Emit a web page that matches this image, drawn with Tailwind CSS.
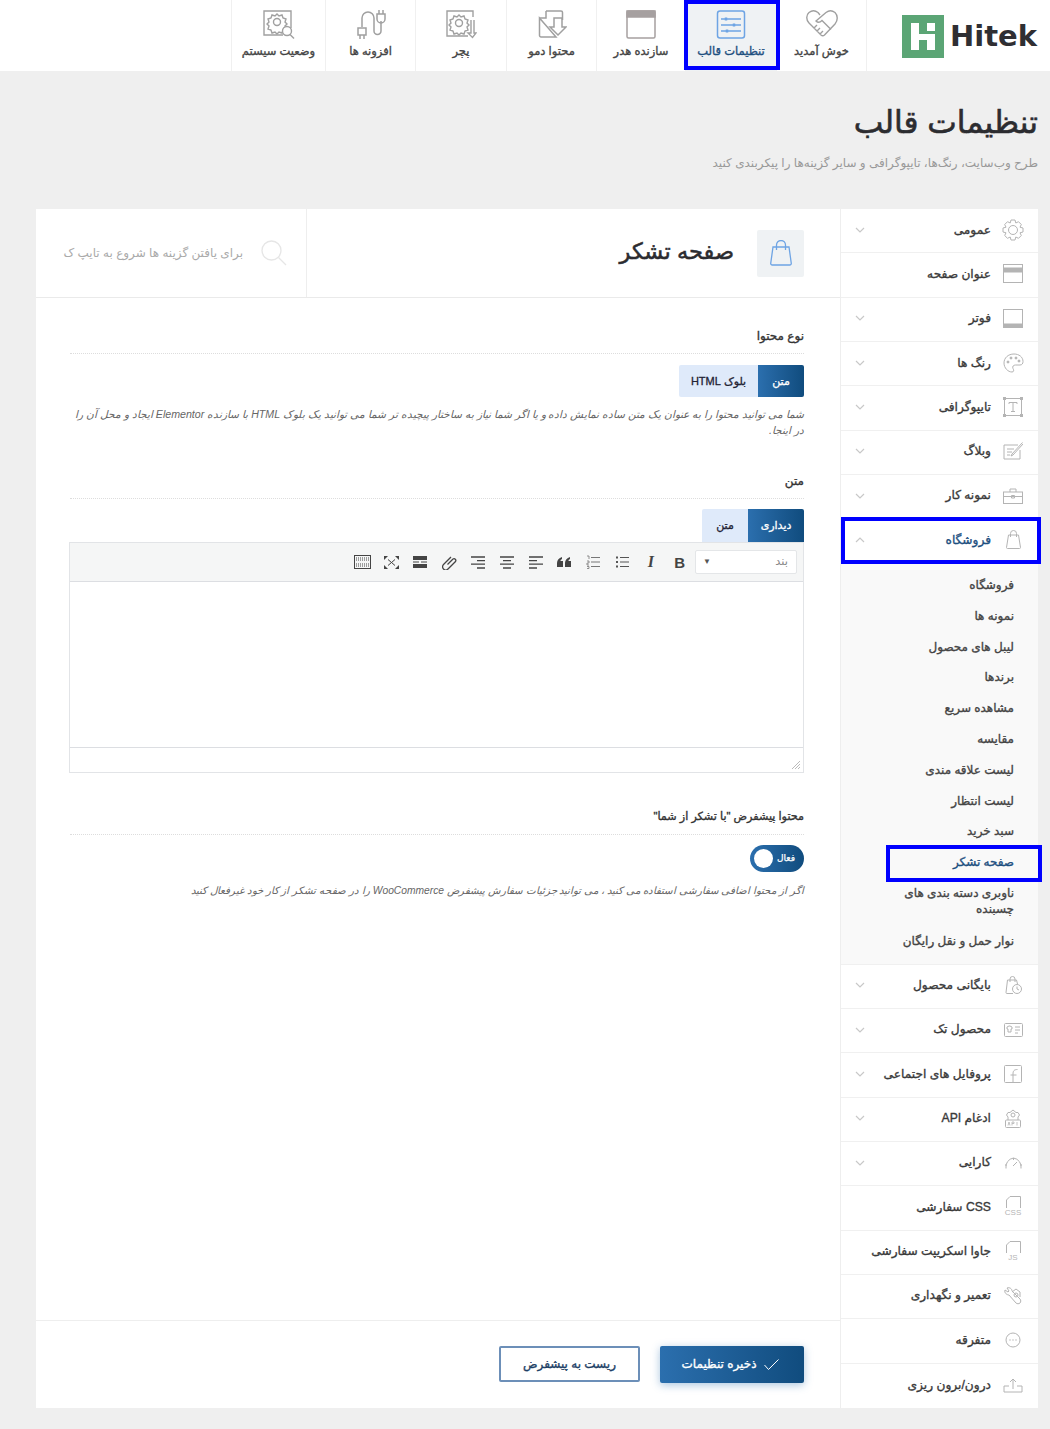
<!DOCTYPE html>
<html dir="rtl" lang="fa">
<head>
<meta charset="utf-8">
<title>تنظیمات قالب</title>
<script src="https://cdn.jsdelivr.net/npm/@tailwindcss/browser@4"></script>
</head>
<body class="m-0 bg-[#efefef] font-['Liberation_Sans','DejaVu_Sans',sans-serif] text-[#333]">
<div class="relative w-[1050px] h-[1429px] overflow-hidden">

<!-- top bar -->
<header class="flex h-[71px] bg-white">
  <div class="w-[183px] flex items-center justify-end gap-[6px] pr-[13px] pt-[1px]" dir="ltr">
    <svg width="42" height="43" viewBox="0 0 42 43"><rect width="42" height="43" fill="#5ba575"/><path d="M9 8h8v11h8V8h8v27h-8V25h-8v10H9z" fill="#fff"/><rect x="25" y="8" width="8" height="8" fill="#fff"/><rect x="25" y="16" width="8" height="3" fill="#5ba575"/></svg>
    <span class="font-['DejaVu_Sans',sans-serif] font-bold text-[29px] leading-none text-[#2f2f33]">Hitek</span>
  </div>
  <nav class="flex text-[11.500px] text-[#444] [-webkit-text-stroke:0.35px]">
    <a class="w-[91px] border-x border-[#f0f0f0] flex flex-col items-center pt-[9px]">
      <svg width="32" height="30" viewBox="0 0 32 30" fill="none" stroke="#a0a0a0" stroke-width="1.400"><path d="M14 6l-2-2.500a7.500 7.500 0 0 0-9 0C0 6 0 11 3 14l12 12c1 1 2.500 1 3.500 0L29 15c3-3.500 3-8.500 0-11.500a7.500 7.500 0 0 0-9 0L10 12c2 2 4 1.500 6-.5l9 9M8 19l3-3M11 22l3-3M14 25l3-3"/></svg>
      <span class="mt-[4px] whitespace-nowrap">خوش آمدید</span>
    </a>
    <a class="w-[90px] bg-[#eff2f4] flex flex-col items-center pt-[9px] text-[#1d4f7f]">
      <svg width="30" height="30" viewBox="0 0 30 30" fill="none" stroke="#6ea4e4" stroke-width="1.500"><rect x="1.500" y="2" width="27" height="27" rx="2.500"/><path d="M5 10h20M5 16h20M5 22h20"/><path d="M10 8.500v3M18 14.500v3M11 20.500v3" stroke-width="2.500"/></svg>
      <span class="mt-[4px] whitespace-nowrap">تنظیمات قالب</span>
    </a>
    <a class="w-[90px] border-x border-[#f0f0f0] flex flex-col items-center pt-[9px]">
      <svg width="30" height="30" viewBox="0 0 30 30" fill="none" stroke="#a6a0a0" stroke-width="1.500"><rect x="1" y="2" width="28" height="27" rx="1.500"/><rect x="1" y="2" width="28" height="6" fill="#a6a0a0"/></svg>
      <span class="mt-[4px] whitespace-nowrap">سازنده هدر</span>
    </a>
    <a class="w-[90px] border-l border-[#f0f0f0] flex flex-col items-center pt-[9px]">
      <svg width="30" height="30" viewBox="0 0 30 30" fill="none" stroke="#a0a0a0" stroke-width="1.500"><path d="M9 2h15a1.500 1.500 0 0 1 1.500 1.500V11M19 28H4a1.500 1.500 0 0 1-1.500-1.500V9z"/><path d="M9 2v7H2.500M17 9v9h-4l8 8 8-8h-4V9z"/></svg>
      <span class="mt-[4px] whitespace-nowrap">محتوا دمو</span>
    </a>
    <a class="w-[91px] border-l border-[#f0f0f0] flex flex-col items-center pt-[9px]">
      <svg width="32" height="30" viewBox="0 0 32 30" fill="none" stroke="#a0a0a0" stroke-width="1.400"><path d="M28 8V2H2v25h21"/><circle cx="14" cy="14" r="3.500"/><path d="M14 6l2 2 3-1 1 3 3 1-1 3 2 2-2 2 1 3-3 1-1 3-3-1-2 2-2-2-3 1-1-3-3-1 1-3-2-2 2-2-1-3 3-1 1-3 3 1z"/><path d="M26 11v13h-3l4.500 4.500L31 24h-2V11"/></svg>
      <span class="mt-[4px] whitespace-nowrap">پچر</span>
    </a>
    <a class="w-[90px] border-l border-[#f0f0f0] flex flex-col items-center pt-[9px]">
      <svg width="30" height="30" viewBox="0 0 30 30" fill="none" stroke="#a0a0a0" stroke-width="1.500"><path d="M6 18V9a6 6 0 0 1 12 0v13a3.500 3.500 0 0 0 7 0V12"/><path d="M2 19h8v7H2zM4 26v4M8 26v4"/><path d="M21 5h8v5a4 4 0 0 1-8 0zM23 5V1M27 5V1"/></svg>
      <span class="mt-[4px] whitespace-nowrap">افزونه ها</span>
    </a>
    <a class="w-[94px] border-l border-[#f0f0f0] flex flex-col items-center pt-[9px]">
      <svg width="32" height="30" viewBox="0 0 32 30" fill="none" stroke="#a0a0a0" stroke-width="1.400"><path d="M20 26H1V2h27v17"/><circle cx="14" cy="13" r="3.500"/><path d="M14 5l2 2 3-1 1 3 3 1-1 3 2 2-2 2 1 3-3 1-1 3-3-1-2 2-2-2-3 1-1-3-3-1 1-3-2-2 2-2-1-3 3-1 1-3 3 1z"/><circle cx="24" cy="22" r="4.500" fill="#fff"/><path d="M27 25.500l4 4"/></svg>
      <span class="mt-[4px] whitespace-nowrap">وضعیت سیستم</span>
    </a>
  </nav>
</header>

<!-- page title -->
<div class="pr-[12px] pt-[30px] h-[138px]">
  <h1 class="m-0 text-[31.400px] leading-[44px] font-normal text-[#2c2c30] [-webkit-text-stroke:0.6px]">تنظیمات قالب</h1>
  <p class="m-0 mt-[8px] text-[12px] leading-[20px] text-[#999]">طرح وب‌سایت، رنگ‌ها، تایپوگرافی و سایر گزینه‌ها را پیکربندی کنید</p>
</div>

<!-- panel -->
<div class="flex mr-[12px] w-[1002px] h-[1199px] bg-white">

  <!-- sidebar -->
  <aside class="w-[198px] shrink-0 border-l border-[#eee] text-[12.200px] text-[#3a3a3a] [-webkit-text-stroke:0.35px]">
    <div class="h-[44.330px] pb-[2px] border-b border-[#f0f0f0] flex items-center">
      <span class="w-[47px] pr-[3px] flex justify-center"><svg width="22" height="22" viewBox="0 0 22 22" fill="none" stroke="#b4b4b4"><circle cx="11" cy="11" r="4.500"/><path d="M9 1h4l.8 3 2.700-1.300 2.800 2.800L18 8.200l3 .8v4l-3 .8 1.300 2.700-2.800 2.800-2.700-1.300-.8 3H9l-.8-3-2.700 1.300-2.800-2.800L4 13.800 1 13V9l3-.8-1.300-2.700 2.800-2.800L8.200 4z"/></svg></span>
      <span class="flex-1">عمومی</span>
      <svg class="ml-[14px]" width="10" height="6" viewBox="0 0 10 6" fill="none" stroke="#c8c8c8" stroke-width="1.200"><path d="M1 1l4 4 4-4"/></svg>
    </div>
    <div class="h-[44.330px] pb-[2px] border-b border-[#f0f0f0] flex items-center">
      <span class="w-[47px] pr-[3px] flex justify-center"><svg width="20" height="19" viewBox="0 0 20 19" fill="none" stroke="#b4b4b4"><rect x=".5" y=".5" width="19" height="18"/><rect x=".5" y="4" width="19" height="4" fill="#b4b4b4"/></svg></span>
      <span class="flex-1">عنوان صفحه</span>
    </div>
    <div class="h-[44.330px] pb-[2px] border-b border-[#f0f0f0] flex items-center">
      <span class="w-[47px] pr-[3px] flex justify-center"><svg width="20" height="19" viewBox="0 0 20 19" fill="none" stroke="#b4b4b4"><rect x=".5" y=".5" width="19" height="18"/><rect x=".5" y="15" width="19" height="3.500" fill="#b4b4b4"/></svg></span>
      <span class="flex-1">فوتر</span>
      <svg class="ml-[14px]" width="10" height="6" viewBox="0 0 10 6" fill="none" stroke="#c8c8c8" stroke-width="1.200"><path d="M1 1l4 4 4-4"/></svg>
    </div>
    <div class="h-[44.330px] pb-[2px] border-b border-[#f0f0f0] flex items-center">
      <span class="w-[47px] pr-[3px] flex justify-center"><svg width="21" height="20" viewBox="0 0 21 20" fill="none" stroke="#b4b4b4"><path d="M11 1C5 1 1 5 1 10s4 9 8 9c2 0 2-2 1-3.500-1-2 .5-3.500 2.500-3.500H17c2 0 3-1.500 3-3.500C20 4 16 1 11 1z"/><circle cx="5" cy="9" r="1" fill="#b4b4b4"/><circle cx="8" cy="5" r="1" fill="#b4b4b4"/><circle cx="13" cy="5" r="1" fill="#b4b4b4"/><circle cx="16" cy="8" r="1" fill="#b4b4b4"/></svg></span>
      <span class="flex-1">رنگ ها</span>
      <svg class="ml-[14px]" width="10" height="6" viewBox="0 0 10 6" fill="none" stroke="#c8c8c8" stroke-width="1.200"><path d="M1 1l4 4 4-4"/></svg>
    </div>
    <div class="h-[44.330px] pb-[2px] border-b border-[#f0f0f0] flex items-center">
      <span class="w-[47px] pr-[3px] flex justify-center"><svg width="20" height="20" viewBox="0 0 20 20" fill="none" stroke="#b4b4b4"><rect x="1.500" y="1.500" width="17" height="17"/><rect x=".5" y=".5" width="2" height="2" fill="#b4b4b4"/><rect x="17.500" y=".5" width="2" height="2" fill="#b4b4b4"/><rect x=".5" y="17.500" width="2" height="2" fill="#b4b4b4"/><rect x="17.500" y="17.500" width="2" height="2" fill="#b4b4b4"/><path d="M6 7V5.500h8V7M10 5.500v9M8 14.500h4"/></svg></span>
      <span class="flex-1">تایپوگرافی</span>
      <svg class="ml-[14px]" width="10" height="6" viewBox="0 0 10 6" fill="none" stroke="#c8c8c8" stroke-width="1.200"><path d="M1 1l4 4 4-4"/></svg>
    </div>
    <div class="h-[44.330px] pb-[2px] border-b border-[#f0f0f0] flex items-center">
      <span class="w-[47px] pr-[3px] flex justify-center"><svg width="20" height="18" viewBox="0 0 20 18" fill="none" stroke="#b4b4b4"><path d="M15 3H1v14h16V8M4 7h7M4 10h5M4 13h3"/><path d="M19.500.5L9 12l-1 2 2-1L20 2"/></svg></span>
      <span class="flex-1">وبلاگ</span>
      <svg class="ml-[14px]" width="10" height="6" viewBox="0 0 10 6" fill="none" stroke="#c8c8c8" stroke-width="1.200"><path d="M1 1l4 4 4-4"/></svg>
    </div>
    <div class="h-[44.330px] pb-[2px] border-b border-[#f0f0f0] flex items-center">
      <span class="w-[47px] pr-[3px] flex justify-center"><svg width="20" height="16" viewBox="0 0 20 16" fill="none" stroke="#b4b4b4"><rect x=".5" y="4" width="19" height="11.500"/><path d="M7 4V1h6v3M.5 8.500h19M8.500 7.500h3v2.500h-3z"/></svg></span>
      <span class="flex-1">نمونه کار</span>
      <svg class="ml-[14px]" width="10" height="6" viewBox="0 0 10 6" fill="none" stroke="#c8c8c8" stroke-width="1.200"><path d="M1 1l4 4 4-4"/></svg>
    </div>
    <div class="h-[44.330px] pb-[2px] border-b border-[#f0f0f0] flex items-center text-[#1d4f7f]">
      <span class="w-[47px] pr-[3px] flex justify-center"><svg width="15" height="19" viewBox="0 0 15 19" fill="none" stroke="#b4b4b4"><path d="M2.500 5h10l2 12.500a1 1 0 0 1-1 1h-12a1 1 0 0 1-1-1zM4.500 7V3.500a3 3 0 0 1 6 0V7"/></svg></span>
      <span class="flex-1">فروشگاه</span>
      <svg class="ml-[14px]" width="10" height="6" viewBox="0 0 10 6" fill="none" stroke="#c8c8c8" stroke-width="1.200"><path d="M1 5l4-4 4 4"/></svg>
    </div>

    <ul class="m-0 pt-[6px] pr-[24px] pl-[50px] h-[401px] bg-[#f9f9f9] border-b border-[#f0f0f0] list-none text-[12px] text-[#444]">
      <li class="h-[30.800px] flex items-center">فروشگاه</li>
      <li class="h-[30.800px] flex items-center">نمونه ها</li>
      <li class="h-[30.800px] flex items-center">لیبل های محصول</li>
      <li class="h-[30.800px] flex items-center">برندها</li>
      <li class="h-[30.800px] flex items-center">مشاهده سریع</li>
      <li class="h-[30.800px] flex items-center">مقایسه</li>
      <li class="h-[30.800px] flex items-center">لیست علاقه مندی</li>
      <li class="h-[30.800px] flex items-center">لیست انتظار</li>
      <li class="h-[30.800px] flex items-center">سبد خرید</li>
      <li class="h-[30.800px] flex items-center text-[#1d4f7f]">صفحه تشکر</li>
      <li class="h-[47px] flex items-center leading-[16px]">ناوبری دسته بندی های چسبنده</li>
      <li class="h-[32px] flex items-center whitespace-nowrap">نوار حمل و نقل رایگان</li>
    </ul>

    <div class="h-[44.330px] pb-[2px] border-b border-[#f0f0f0] flex items-center">
      <span class="w-[47px] pr-[3px] flex justify-center"><svg width="17" height="20" viewBox="0 0 17 20" fill="none" stroke="#b4b4b4"><path d="M8 18.500H2a1 1 0 0 1-1-1L2.500 5h9l1 4M5 7V4a2.500 2.500 0 0 1 5 0v3"/><circle cx="12" cy="14" r="4.500"/><path d="M12 11.500V14l2 1"/></svg></span>
      <span class="flex-1">بایگانی محصول</span>
      <svg class="ml-[14px]" width="10" height="6" viewBox="0 0 10 6" fill="none" stroke="#c8c8c8" stroke-width="1.200"><path d="M1 1l4 4 4-4"/></svg>
    </div>
    <div class="h-[44.330px] pb-[2px] border-b border-[#f0f0f0] flex items-center">
      <span class="w-[47px] pr-[3px] flex justify-center"><svg width="19" height="14" viewBox="0 0 19 14" fill="none" stroke="#b4b4b4"><rect x=".5" y=".5" width="18" height="13" rx="1"/><path d="M3 4l2-1h1l2 1v2H7v3H4V6H3zM11 4h5M11 7h5M11 10h3"/></svg></span>
      <span class="flex-1">محصول تک</span>
      <svg class="ml-[14px]" width="10" height="6" viewBox="0 0 10 6" fill="none" stroke="#c8c8c8" stroke-width="1.200"><path d="M1 1l4 4 4-4"/></svg>
    </div>
    <div class="h-[44.330px] pb-[2px] border-b border-[#f0f0f0] flex items-center">
      <span class="w-[47px] pr-[3px] flex justify-center"><svg width="18" height="18" viewBox="0 0 18 18" fill="none" stroke="#b4b4b4"><rect x=".5" y=".5" width="17" height="17" rx="1"/><path d="M9 17.500V9c0-3 1-4.500 4.500-4.500M6.500 10h6"/></svg></span>
      <span class="flex-1 whitespace-nowrap">پروفایل های اجتماعی</span>
      <svg class="ml-[14px]" width="10" height="6" viewBox="0 0 10 6" fill="none" stroke="#c8c8c8" stroke-width="1.200"><path d="M1 1l4 4 4-4"/></svg>
    </div>
    <div class="h-[44.330px] pb-[2px] border-b border-[#f0f0f0] flex items-center">
      <span class="w-[47px] pr-[3px] flex justify-center"><svg width="16" height="19" viewBox="0 0 16 19" fill="none" stroke="#b4b4b4"><circle cx="8" cy="6" r="2"/><path d="M3 11V8L1.500 6 3 3.500l2 0L8 1l3 2.500 2 0L14.500 6 13 8v3"/><rect x=".5" y="11" width="15" height="7.500" rx="1"/><path d="M3 16.500l1-3.500 1 3.500M7 16.500V13h2v1.500H7M12 13v3.500" stroke-width=".8"/></svg></span>
      <span class="flex-1">ادغام API</span>
      <svg class="ml-[14px]" width="10" height="6" viewBox="0 0 10 6" fill="none" stroke="#c8c8c8" stroke-width="1.200"><path d="M1 1l4 4 4-4"/></svg>
    </div>
    <div class="h-[44.330px] pb-[2px] border-b border-[#f0f0f0] flex items-center">
      <span class="w-[47px] pr-[3px] flex justify-center"><svg width="19" height="12" viewBox="0 0 19 12" fill="none" stroke="#b4b4b4"><path d="M2 11.500A9 9 0 0 1 9.500 1 9 9 0 0 1 17 11.500M9 9l4-4M1 8h2M16 8h2M9.500 1v2"/></svg></span>
      <span class="flex-1">کارایی</span>
      <svg class="ml-[14px]" width="10" height="6" viewBox="0 0 10 6" fill="none" stroke="#c8c8c8" stroke-width="1.200"><path d="M1 1l4 4 4-4"/></svg>
    </div>
    <div class="h-[44.330px] pb-[2px] border-b border-[#f0f0f0] flex items-center">
      <span class="w-[47px] pr-[3px] flex flex-col items-center justify-center leading-none"><svg width="15" height="12" viewBox="0 0 15 12" fill="none" stroke="#b4b4b4"><path d="M.5 12V4L4 .5h10.500V12"/></svg><span class="text-[8px] text-[#b4b4b4] mt-[1px] [-webkit-text-stroke:0]">CSS</span></span>
      <span class="flex-1">CSS سفارشی</span>
    </div>
    <div class="h-[44.330px] pb-[2px] border-b border-[#f0f0f0] flex items-center">
      <span class="w-[47px] pr-[3px] flex flex-col items-center justify-center leading-none"><svg width="15" height="12" viewBox="0 0 15 12" fill="none" stroke="#b4b4b4"><path d="M.5 12V4L4 .5h10.500V12"/></svg><span class="text-[8px] text-[#b4b4b4] mt-[1px] [-webkit-text-stroke:0]">JS</span></span>
      <span class="flex-1 whitespace-nowrap">جاوا اسکریپت سفارشی</span>
    </div>
    <div class="h-[44.330px] pb-[2px] border-b border-[#f0f0f0] flex items-center">
      <span class="w-[47px] pr-[3px] flex justify-center"><svg width="18" height="18" viewBox="0 0 18 18" fill="none" stroke="#b4b4b4"><path d="M1 3l3 2 1-1-2-3c3-1 5 1 5 3l8 8c1 1 1 3 0 4s-3 1-4 0L5 8C3 8 0 6 1 3z"/><circle cx="12" cy="8" r="2"/><path d="M8 5l4-3 4 3v5"/></svg></span>
      <span class="flex-1">تعمیر و نگهداری</span>
    </div>
    <div class="h-[44.330px] pb-[2px] border-b border-[#f0f0f0] flex items-center">
      <span class="w-[47px] pr-[3px] flex justify-center"><svg width="16" height="16" viewBox="0 0 16 16" fill="none" stroke="#b4b4b4"><circle cx="8" cy="8" r="7"/><path d="M4.500 8h1M7.500 8h1M10.500 8h1" stroke-width="1.300"/></svg></span>
      <span class="flex-1">متفرقه</span>
    </div>
    <div class="h-[44px] flex items-center">
      <span class="w-[47px] pr-[3px] flex justify-center"><svg width="20" height="15" viewBox="0 0 20 15" fill="none" stroke="#b4b4b4"><path d="M10 11V1M7 4l3-3 3 3M6 8H1v6h18V8h-5"/></svg></span>
      <span class="flex-1">درون/برون ریزی</span>
    </div>
  </aside>

  <!-- content -->
  <main class="flex-1 min-w-0 flex flex-col">
    <div class="h-[89px] flex border-b border-[#eaeaea] shrink-0">
      <div class="flex-1 flex items-center pr-[36px] gap-[23px]">
        <span class="w-[47px] h-[47px] rounded-[2px] bg-[#eff2f4] flex items-center justify-center"><svg width="22" height="26" viewBox="0 0 22 26" fill="none" stroke="#6ea4e4" stroke-width="1.300"><path d="M3 7h16l2.300 16.500a1.500 1.500 0 0 1-1.500 1.500H2.200a1.500 1.500 0 0 1-1.500-1.500zM6.500 10V5a4.500 4.500 0 0 1 9 0v5"/></svg></span>
        <h2 class="m-0 pb-[3px] text-[22.500px] font-normal text-[#2c2c30] [-webkit-text-stroke:0.5px]">صفحه تشکر</h2>
      </div>
      <div class="w-[271px] border-r border-[#eee] flex items-center pr-[19px] gap-[18px]">
        <svg class="shrink-0" width="26" height="26" viewBox="0 0 26 26" fill="none" stroke="#e6e6e6" stroke-width="1.300"><circle cx="10.500" cy="10.500" r="9.500"/><path d="M17.500 17.500l7.500 7.500"/></svg>
        <span class="whitespace-nowrap text-[12px] text-[#aaa]">برای یافتن گزینه ها شروع به تایپ ک</span>
      </div>
    </div>

    <div class="flex-1 pr-[36px] pl-[34px] pt-[28px]">
      <h3 class="m-0 text-[12px] leading-[20px] font-normal text-[#333] [-webkit-text-stroke:0.35px] pb-[7px] border-b border-dotted border-[#ddd]">نوع محتوا</h3>
      <div class="flex mt-[11px] h-[32px] text-[11px] [-webkit-text-stroke:0.3px]">
        <span class="w-[46px] rounded-r-[2px] bg-gradient-to-l from-[#104c7e] to-[#2b6fae] text-white flex items-center justify-center">متن</span>
        <span class="w-[79px] rounded-l-[2px] bg-[#dfeafa] text-[#223] flex items-center justify-center">بلوک HTML</span>
      </div>
      <p class="m-0 mt-[9px] mb-[1px] text-[10.650px] leading-[16px] italic text-[#666] whitespace-nowrap">شما می توانید محتوا را به عنوان یک متن ساده نمایش داده و یا اگر شما نیاز به ساختار پیچیده تر شما می توانید یک بلوک HTML با سازنده Elementor ایجاد و محل آن را<br>در اینجا.</p>

      <h3 class="m-0 mt-[33px] pb-[7px] text-[12px] leading-[20px] font-normal text-[#333] [-webkit-text-stroke:0.35px] border-b border-dotted border-[#ddd]">متن</h3>
      <div class="flex mt-[10px] h-[33px] text-[11px] [-webkit-text-stroke:0.3px]">
        <span class="w-[56px] rounded-tr-[2px] bg-gradient-to-l from-[#104c7e] to-[#2b6fae] text-white flex items-center justify-center">دیداری</span>
        <span class="w-[46px] rounded-tl-[2px] bg-[#dfeafa] text-[#223] flex items-center justify-center">متن</span>
      </div>
      <div class="-ml-[1px] h-[231px] border border-[#e2e4e7] flex flex-col">
        <div class="h-[39px] shrink-0 bg-[#f5f6f6] border-b border-[#dcdee2] flex items-center pr-[6px] text-[#555]">
          <span class="w-[102px] h-[24px] bg-white border border-[#e4e6e8] rounded-[2px] flex items-center justify-between pr-[8px] pl-[7px] text-[11.500px] text-[#888]"><span>بند</span><span class="text-[8px] text-[#555]">▼</span></span>
          <span class="w-[1px]"></span>
          <span class="w-[28.800px] text-center font-bold text-[15px] leading-none text-[#444]" dir="ltr">B</span>
          <span class="w-[28.800px] text-center italic font-bold text-[16px] leading-none text-[#444] font-['Liberation_Serif',serif]" dir="ltr">I</span>
          <span class="w-[28.800px] flex justify-center"><svg width="14" height="12" viewBox="0 0 14 12" fill="none" stroke="#555"><path d="M5 1.500h9M5 6h9M5 10.500h9"/><path d="M1 1.500h2M1 6h2M1 10.500h2" stroke-width="2"/></svg></span>
          <span class="w-[28.800px] flex justify-center"><svg width="14" height="14" viewBox="0 0 14 14" fill="none" stroke="#777"><path d="M5 2.500h9M5 7h9M5 11.500h9"/><path d="M1 1h2v3M1 6h2v2H1v2h2M1 11.500h2v2H1" stroke-width=".8"/></svg></span>
          <span class="w-[28.800px] flex justify-center"><svg width="14" height="10" viewBox="0 0 14 10" fill="#444"><path d="M0 6c0-3 2-5 5-6v2C4 2.500 3.500 3 3.500 4H6v6H0zM8 6c0-3 2-5 5-6v2c-1 .5-1.500 1-1.500 2H14v6H8z"/></svg></span>
          <span class="w-[28.800px] flex justify-center"><svg width="14" height="13" viewBox="0 0 14 13" stroke="#444" stroke-width="1.300"><path d="M0 1h14M0 4.600h8M0 8.200h14M0 12h8"/></svg></span>
          <span class="w-[28.800px] flex justify-center"><svg width="14" height="13" viewBox="0 0 14 13" stroke="#444" stroke-width="1.300"><path d="M0 1h14M3 4.600h8M0 8.200h14M3 12h8"/></svg></span>
          <span class="w-[28.800px] flex justify-center"><svg width="14" height="13" viewBox="0 0 14 13" stroke="#444" stroke-width="1.300"><path d="M0 1h14M6 4.600h8M0 8.200h14M6 12h8"/></svg></span>
          <span class="w-[28.800px] flex justify-center"><svg width="15" height="15" viewBox="0 0 15 15" fill="none" stroke="#444" stroke-width="1.300"><path d="M5.500 9.500L11 4a1.800 1.800 0 0 1 2.500 2.500L6 14a3 3 0 0 1-4.500-4.500L9 2"/></svg></span>
          <span class="w-[28.800px] flex justify-center"><svg width="14" height="12" viewBox="0 0 14 12" fill="#444"><rect width="14" height="4"/><rect y="5.500" width="6" height="1"/><rect x="8" y="5.500" width="6" height="1"/><rect y="8" width="14" height="4"/></svg></span>
          <span class="w-[28.800px] flex justify-center"><svg width="15" height="13" viewBox="0 0 15 13" fill="#444" stroke="#444"><path d="M4 3.500l7 6M11 3.500l-7 6" fill="none"/><path d="M0 0h4l-4 4zM15 0h-4l4 4zM0 13h4l-4-4zM15 13h-4l4-4z" stroke="none"/></svg></span>
          <span class="w-[28.800px] flex justify-center"><svg width="17" height="14" viewBox="0 0 17 14" fill="none" stroke="#444"><rect x=".5" y=".5" width="16" height="13"/><path d="M2 3h13M2 5h13M2 9h13M2 11h13" stroke-dasharray="1 1" stroke-width="1.200"/></svg></span>
        </div>
        <div class="flex-1 bg-white"></div>
        <div class="h-[25px] shrink-0 border-t border-[#dcdee2] bg-white flex items-end justify-start p-[3px]"><svg width="8" height="8" viewBox="0 0 8 8" stroke="#bbb"><path d="M0 8l8-8M3 8l5-5M6 8l2-2"/></svg></div>
      </div>

      <h3 class="m-0 mt-[33px] pb-[8px] text-[11.200px] leading-[20px] font-normal text-[#333] [-webkit-text-stroke:0.35px] border-b border-dotted border-[#ddd]">محتوا پیشفرض "با تشکر از شما"</h3>
      <div class="mt-[10px] w-[54px] h-[27px] rounded-full bg-gradient-to-l from-[#104c7e] to-[#2b6fae] flex items-center justify-between pr-[9px] pl-[4px] text-white text-[9px] [-webkit-text-stroke:0.25px]">
        <span>فعال</span>
        <span class="w-[19px] h-[19px] rounded-full bg-white"></span>
      </div>
      <p class="m-0 mt-[11px] text-[10.270px] leading-[16px] italic text-[#666] whitespace-nowrap">اگر از محتوا اضافی سفارشی استفاده می کنید ، می توانید جزئیات سفارش پیشفرض WooCommerce را در صفحه تشکر از کار خود غیرفعال کنید</p>
    </div>

    <div class="h-[88px] shrink-0 border-t border-[#eee] flex items-center pr-[36px] gap-[20px] pb-[1px]">
      <button class="w-[144px] h-[37px] rounded-[2px] bg-gradient-to-l from-[#104c7e] to-[#2b6fae] text-white text-[12px] [-webkit-text-stroke:0.35px] flex items-center justify-center gap-[8px] pr-[3px] shadow-[0_2px_8px_rgba(43,111,174,0.4)]"><svg width="15" height="11" viewBox="0 0 15 11" fill="none" stroke="#fff"><path d="M.5 6l4 4.500L14.500.5"/></svg><span>ذخیره تنظیمات</span></button>
      <button class="w-[141px] h-[36px] rounded-[2px] bg-white border-2 border-[#6c8fb8] text-[#1d3f66] text-[12px] [-webkit-text-stroke:0.35px] flex items-center justify-center">ریست به پیشفرض</button>
    </div>
  </main>
</div>

<!-- blue annotation frames -->
<div class="absolute left-[684px] top-0 w-[96px] h-[70px] border-[4px] border-[#0000ff]"></div>
<div class="absolute left-[841px] top-[517px] w-[200px] h-[47px] border-[4px] border-[#0000ff]"></div>
<div class="absolute left-[886px] top-[845px] w-[156px] h-[37px] border-[4px] border-[#0000ff]"></div>
</div>
</body>
</html>
